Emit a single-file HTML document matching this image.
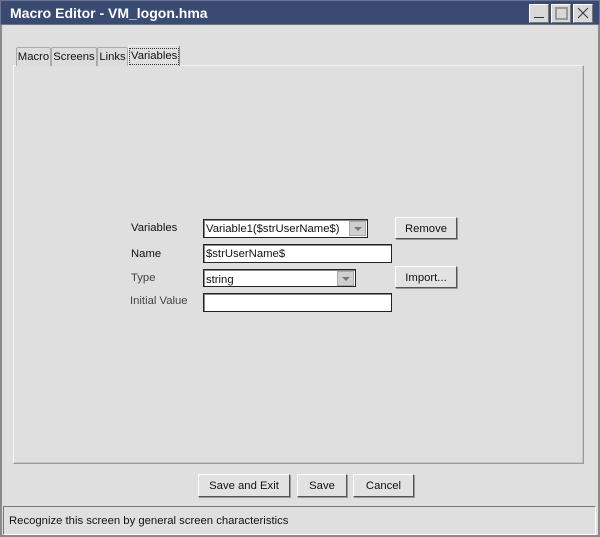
<!DOCTYPE html>
<html><head><style>
*{margin:0;padding:0;box-sizing:border-box}
body{width:600px;height:537px;background:#dfdfdf;font-family:"Liberation Sans",sans-serif;font-size:11.3px;color:#111;position:relative;overflow:hidden}
.a{position:absolute}
.win{left:0;top:0;width:600px;height:537px;border:2px solid #8a8a8a;border-top:none}
.title{left:0;top:0;width:600px;height:25px;background:#3b4a72;border:1px solid #6b7592;color:#fff;font-weight:bold;font-size:14px;line-height:25px;padding-left:9px}
.tb{top:4px;width:20px;height:19px;background:#d8d8d8;border:1px solid;border-color:#fff #777 #777 #fff}
.tab{top:47px;height:19px;border:1px solid #aaa;border-bottom:none;border-radius:2px 2px 0 0;line-height:19px;text-align:center;background:#dcdcdc}
.panel{left:13px;top:65px;width:571px;height:399px;border:1px solid;border-color:#f4f4f4 #999 #999 #f4f4f4;box-shadow:inset -1px -1px 0 #c8c8c8}
.lbl{left:131px}
.in{background:#fff;border:1px solid #222;box-shadow:inset 1px 1px 0 #888;height:19px;line-height:19px;padding-left:2px}
.dd{width:17px;height:15px;top:1px;right:1px;background:#cfcfcf;border:1px solid #aaa}
.dd:after{content:"";position:absolute;left:4px;top:5px;border-left:4px solid transparent;border-right:4px solid transparent;border-top:4px solid #777}
.btn{background:#e2e2e2;border:1px solid;border-color:#fff #555 #555 #fff;box-shadow:1px 1px 0 #999;text-align:center;line-height:22px}
</style></head><body>
<div class="a win"></div>
<div class="a title">Macro Editor - VM_logon.hma</div>
<div class="a tb" style="left:529px"><div class="a" style="left:4px;top:12px;width:10px;height:1px;background:#333"></div></div>
<div class="a tb" style="left:551px"><div class="a" style="left:3px;top:2px;width:13px;height:13px;border:2px solid #999"></div></div>
<div class="a tb" style="left:573px"><svg class="a" style="left:0;top:0" width="18" height="17"><path d="M4 3L14 13M14 3L4 13" stroke="#333" stroke-width="1"/></svg></div>
<div class="a panel"></div>
<div class="a tab" style="left:16px;width:35px">Macro</div>
<div class="a tab" style="left:51px;width:46px">Screens</div>
<div class="a tab" style="left:97px;width:31px">Links</div>
<div class="a tab" style="left:128px;width:52px;top:45px;height:21px;background:#dfdfdf;border-color:#eee #888 #888 #eee"><span style="border:1px dotted #333;padding:0 1px;line-height:15px;display:inline-block;margin-top:2px">Variables</span></div>
<div class="a lbl" style="top:222px">Variables</div>
<div class="a lbl" style="top:248px">Name</div>
<div class="a lbl" style="top:272px;color:#444">Type</div>
<div class="a lbl" style="top:295px;color:#444;left:130px">Initial Value</div>
<div class="a in" style="left:203px;top:219px;width:165px">Variable1($strUserName$)<div class="a dd"></div></div>
<div class="a in" style="left:203px;top:244px;width:189px">$strUserName$</div>
<div class="a in" style="left:203px;top:269px;width:153px;height:18px;line-height:20px">string<div class="a dd"></div></div>
<div class="a in" style="left:203px;top:293px;width:189px"></div>
<div class="a btn" style="left:395px;top:217px;width:62px;height:22px">Remove</div>
<div class="a btn" style="left:395px;top:266px;width:62px;height:22px">Import...</div>
<div class="a btn" style="left:198px;top:474px;width:92px;height:23px">Save and Exit</div>
<div class="a btn" style="left:297px;top:474px;width:50px;height:23px">Save</div>
<div class="a btn" style="left:353px;top:474px;width:61px;height:23px">Cancel</div>
<div class="a" style="left:3px;top:506px;width:593px;height:29px;border:1px solid;border-color:#777 #fff #fff #777;line-height:29px;padding-left:5px">Recognize this screen by general screen characteristics</div>
</body></html>
